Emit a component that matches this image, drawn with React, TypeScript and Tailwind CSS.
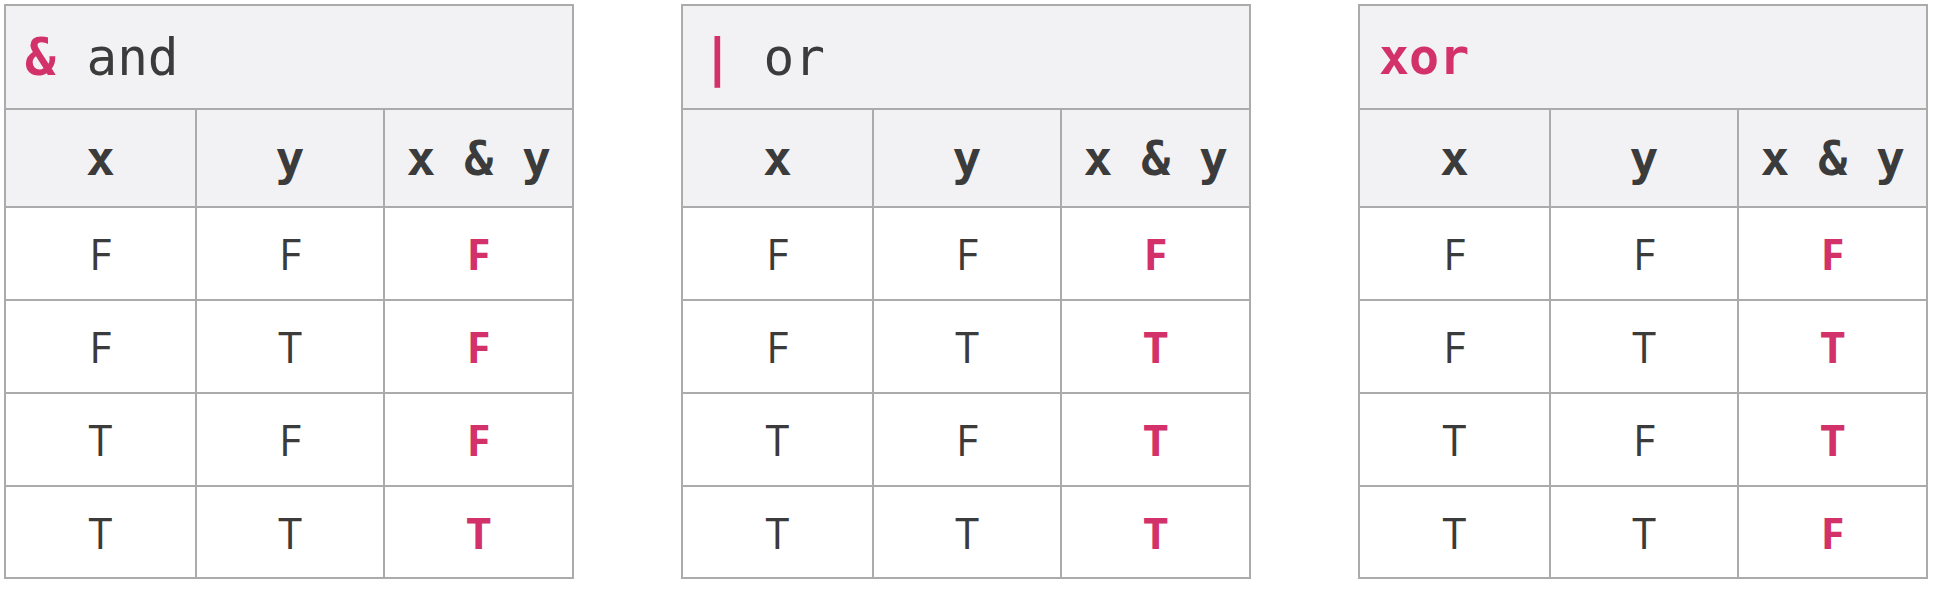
const mono = "font-['DejaVu_Sans_Mono','Liberation_Mono',monospace]";
const sans = "font-['Open_Sans','Noto_Sans',sans-serif]";

type Table = {
  op: string;
  name: string;
  results: string[];
};

const inputs = [
  ["F", "F"],
  ["F", "T"],
  ["T", "F"],
  ["T", "T"],
];

const tables: Table[] = [
  { op: "&", name: "and", results: ["F", "F", "F", "T"] },
  { op: "|", name: "or", results: ["F", "T", "T", "T"] },
  { op: "", name: "xor", results: ["F", "T", "T", "F"] },
];

function TruthTable({ table }: { table: Table }) {
  return (
    <div className="w-[570px] border-2 border-[#ababab] bg-white">
      <div className="h-[104px] border-b-2 border-[#ababab] bg-[#f2f2f4] pl-[19px] flex items-center">
        {table.op ? (
          <span className={`${mono} text-[51px] leading-none whitespace-pre text-[#3b3b3b]`}>
            <span className="font-bold text-[#d3316a]">{table.op}</span>
            {" " + table.name}
          </span>
        ) : (
          <span className={`${mono} text-[50px] leading-none font-bold text-[#d3316a]`}>
            {table.name}
          </span>
        )}
      </div>

      <div className="grid grid-cols-3 h-[98px] border-b-2 border-[#ababab] bg-[#f2f2f4]">
        {["x", "y", "x & y"].map((h, i) => (
          <div
            key={h}
            className={`flex items-center justify-center ${i > 0 ? "border-l-2 border-[#ababab]" : ""}`}
          >
            <span className={`${mono} text-[48px] leading-none font-bold whitespace-pre text-[#3b3b3b]`}>
              {h}
            </span>
          </div>
        ))}
      </div>

      {inputs.map((row, r) => (
        <div
          key={r}
          className={`grid grid-cols-3 ${r < 3 ? "h-[93px] border-b-2 border-[#ababab]" : "h-[90px]"}`}
        >
          <div className="flex items-center justify-center">
            <span className={`${sans} text-[43px] leading-none text-[#3b3b3b]`}>{row[0]}</span>
          </div>
          <div className="flex items-center justify-center border-l-2 border-[#ababab]">
            <span className={`${sans} text-[43px] leading-none text-[#3b3b3b]`}>{row[1]}</span>
          </div>
          <div className="flex items-center justify-center border-l-2 border-[#ababab]">
            <span className={`${sans} text-[43px] leading-none font-bold text-[#d3316a]`}>
              {table.results[r]}
            </span>
          </div>
        </div>
      ))}
    </div>
  );
}

export default function App() {
  return (
    <div className="w-[1934px] h-[590px] bg-white pt-[4px] pl-[4px] flex items-start gap-[107px]">
      {tables.map((t) => (
        <TruthTable key={t.name} table={t} />
      ))}
    </div>
  );
}
